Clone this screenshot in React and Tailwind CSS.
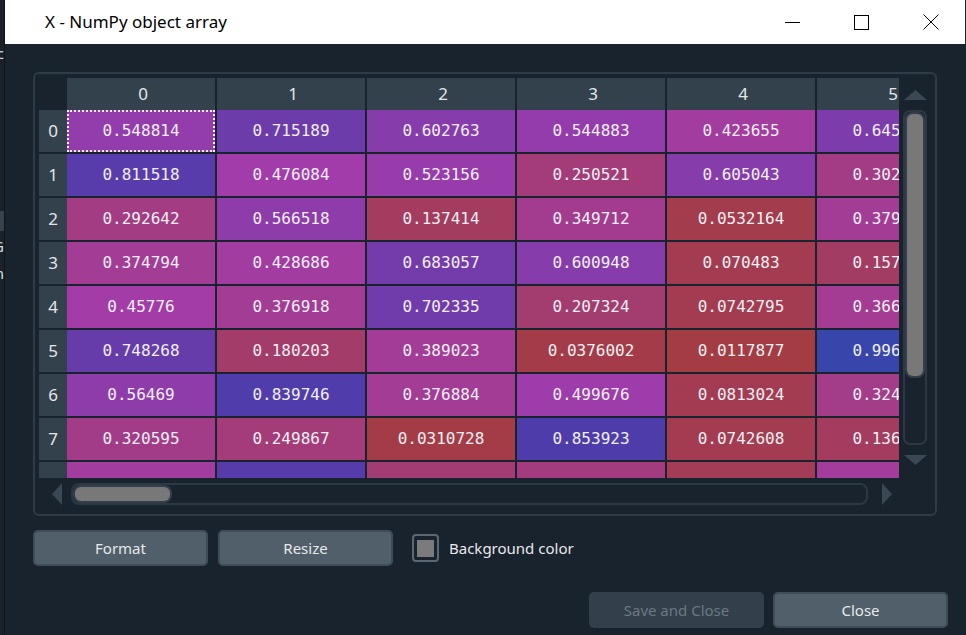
import React from 'react';

// cell colour as the array editor paints it: hue from value, then 60% alpha over the dialog bg
function cellColor(v) {
  const h = ((0.65 + 0.35 * (1 - v)) * 360) % 360;
  const c = 0.7;
  const x = c * (1 - Math.abs(((h / 60) % 2) - 1));
  const m = 0.3;
  let r = 0, g = 0, b = 0;
  if (h < 60) [r, g, b] = [c, x, 0];
  else if (h < 120) [r, g, b] = [x, c, 0];
  else if (h < 180) [r, g, b] = [0, c, x];
  else if (h < 240) [r, g, b] = [0, x, c];
  else if (h < 300) [r, g, b] = [x, 0, c];
  else [r, g, b] = [c, 0, x];
  const bg = [25, 35, 45];
  const mix = (ch, i) => Math.round(0.6 * (ch + m) * 255 + 0.4 * bg[i]);
  return `rgb(${mix(r, 0)}, ${mix(g, 1)}, ${mix(b, 2)})`;
}

const rows = [
  ['0.548814', '0.715189', '0.602763', '0.544883', '0.423655', '0.645894'],
  ['0.811518', '0.476084', '0.523156', '0.250521', '0.605043', '0.302474'],
  ['0.292642', '0.566518', '0.137414', '0.349712', '0.0532164', '0.379525'],
  ['0.374794', '0.428686', '0.683057', '0.600948', '0.070483', '0.157033'],
  ['0.45776', '0.376918', '0.702335', '0.207324', '0.0742795', '0.366349'],
  ['0.748268', '0.180203', '0.389023', '0.0376002', '0.0117877', '0.996011'],
  ['0.56469', '0.839746', '0.376884', '0.499676', '0.0813024', '0.324453'],
  ['0.320595', '0.249867', '0.0310728', '0.853923', '0.0742608', '0.136328'],
  ['0.421089', '0.817834', '0.221583', '0.281712', '0.104527', '0.398753'],
];

function Triangle({ dir }) {
  const pts = {
    up: '0,10 11.5,0 23,10',
    down: '0,0 23,0 11.5,10',
    left: '10,0 10,22 0,11',
    right: '0,0 0,22 10,11',
  }[dir];
  const vertical = dir === 'up' || dir === 'down';
  return (
    <svg width={vertical ? 23 : 10} height={vertical ? 10 : 22} className="shrink-0">
      <polygon points={pts} fill="#3b4853" />
    </svg>
  );
}

export default function App() {
  return (
    <div className="w-[966px] h-[635px] flex overflow-hidden bg-[#19232d] font-['Noto_Sans',sans-serif]">
      <div className="w-[5px] shrink-0 bg-[#1b2129] border-r border-[#10151a] flex flex-col items-end overflow-hidden text-[#d8dadc] text-[15px] leading-none">
        <div className="mt-[46px] whitespace-nowrap">ic</div>
        <div className="mt-[150px] w-[20px] h-[20px] shrink-0 bg-[#3a434c]"></div>
        <div className="mt-[8px] whitespace-nowrap">G</div>
        <div className="mt-[12px] whitespace-nowrap">m</div>
      </div>

      <div className="w-[960px] shrink-0 flex flex-col">
        <div className="h-[44px] shrink-0 bg-white flex items-center">
          <div className="pl-[40px] text-[17px] text-black flex-1">X - NumPy object array</div>
          <div className="w-[69px] h-full flex items-center justify-center">
            <svg width="15" height="15"><line x1="0" y1="7.5" x2="15" y2="7.5" stroke="#000" strokeWidth="1" /></svg>
          </div>
          <div className="w-[69px] h-full flex items-center justify-center">
            <svg width="15" height="15"><rect x="0.5" y="0.5" width="14" height="14" fill="none" stroke="#000" strokeWidth="1" /></svg>
          </div>
          <div className="w-[69px] h-full flex items-center justify-center">
            <svg width="16" height="16"><path d="M0.5 0.5 L15.5 15.5 M15.5 0.5 L0.5 15.5" stroke="#000" strokeWidth="1" /></svg>
          </div>
        </div>

        <div className="flex-1 pl-[28px] pr-[28px] pt-[28px] flex flex-col">
          <div className="h-[444px] border-2 border-[#2f3b47] rounded-[6px] p-[4px] flex flex-col">
            <div className="flex">
              <div className="w-[860px] h-[400px] overflow-hidden">
                <div className="flex h-[32px]">
                  <div className="w-[28px] shrink-0"></div>
                  {[0, 1, 2, 3, 4, 5].map((c) => (
                    <div key={c} className="w-[148px] shrink-0 mr-[2px] pl-[4px] bg-[#32414b] flex items-center justify-center text-[17px] text-[#e4e7ea]">
                      {c}
                    </div>
                  ))}
                </div>
                {rows.map((row, r) => (
                  <div key={r} className="flex h-[42px] mb-[2px]">
                    <div className="w-[28px] shrink-0 bg-[#32414b] flex items-center justify-center text-[17px] text-[#e4e7ea]">
                      {r < 8 ? r : ''}
                    </div>
                    {row.map((v, c) => (
                      <div
                        key={c}
                        className={`w-[148px] shrink-0 mr-[2px] flex items-center justify-center font-['DejaVu_Sans_Mono',monospace] text-[16px] text-[#f0f0f4] whitespace-nowrap ${r === 0 && c === 0 ? 'border-2 border-dotted border-[#f2f2f2]' : ''}`}
                        style={{ backgroundColor: cellColor(parseFloat(v)) }}
                      >
                        {r < 8 ? v : ''}
                      </div>
                    ))}
                  </div>
                ))}
              </div>
              <div className="w-[32px] flex flex-col items-center">
                <div className="mt-[12px]"><Triangle dir="up" /></div>
                <div className="mt-[10px] w-[24px] h-[335px] border-2 border-[#2c3843] rounded-[7px] p-[2px]">
                  <div className="h-[262px] bg-[#787878] rounded-[6px] ring-2 ring-[#33404b]"></div>
                </div>
                <div className="mt-[10px]"><Triangle dir="down" /></div>
              </div>
            </div>
            <div className="h-[32px] flex items-start pt-[5px] pl-[13px]">
              <Triangle dir="left" />
              <div className="ml-[9px] w-[797px] h-[22px] border-2 border-[#2c3843] rounded-[8px] p-[2px]">
                <div className="w-[95px] h-full bg-[#787878] rounded-[6px] ring-2 ring-[#33404b]"></div>
              </div>
              <div className="ml-[14px]"><Triangle dir="right" /></div>
            </div>
          </div>

          <div className="mt-[14px] flex items-center">
            <button className="w-[175px] h-[36px] bg-[#505f69] border-2 border-[#404d59] rounded-[5px] text-[15px] text-[#e8e9ea]">Format</button>
            <button className="ml-[10px] w-[175px] h-[36px] bg-[#505f69] border-2 border-[#404d59] rounded-[5px] text-[15px] text-[#e8e9ea]">Resize</button>
            <div className="ml-[19px] w-[27px] h-[28px] border-2 border-[#5b6772] rounded-[4px] flex items-center justify-center">
              <div className="w-[17px] h-[17px] bg-[#7b7b7b]"></div>
            </div>
            <span className="ml-[10px] text-[15px] text-[#e8e9ea]">Background color</span>
          </div>

          <div className="mt-[26px] -mr-[11px] flex justify-end">
            <button className="w-[175px] h-[36px] bg-[#33404b] rounded-[5px] text-[15px] text-[#6c7883]">Save and Close</button>
            <button className="ml-[9px] w-[175px] h-[36px] bg-[#505f69] border-2 border-[#404d59] rounded-[5px] text-[15px] text-[#e8e9ea]">Close</button>
          </div>
        </div>
      </div>
    </div>
  );
}
